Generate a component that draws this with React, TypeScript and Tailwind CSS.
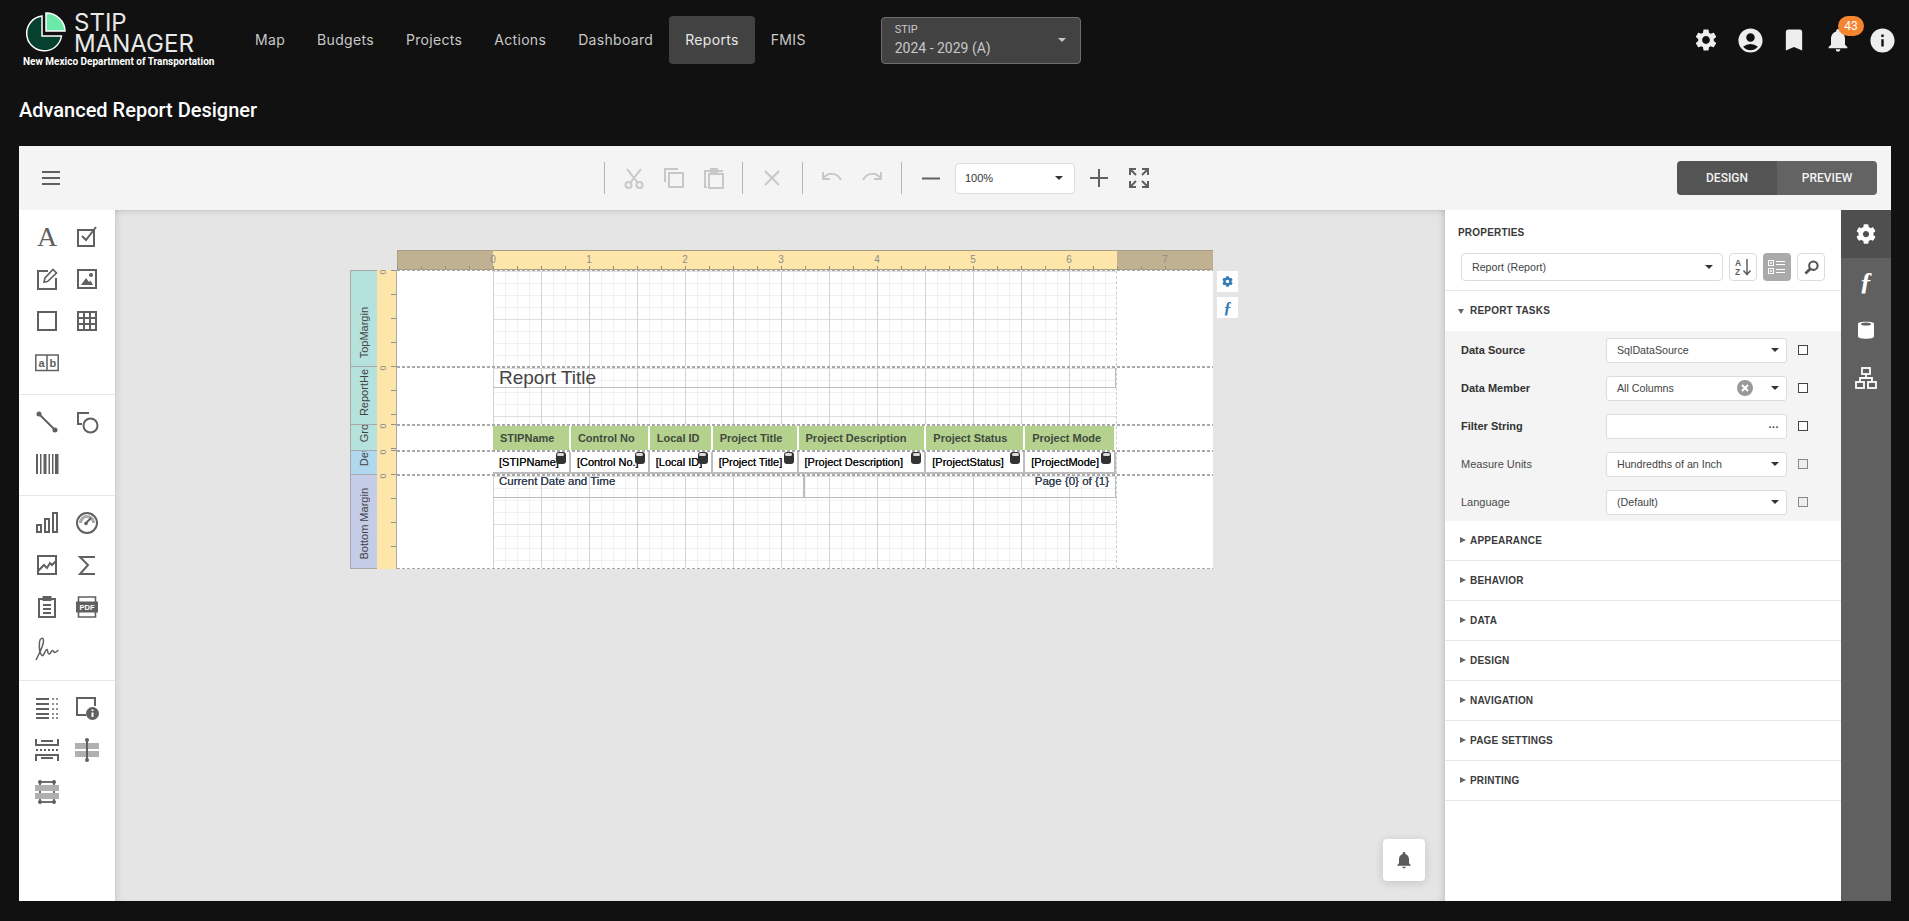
import type { ReactNode } from "react";
import { FaCog } from "react-icons/fa";
import {
  MdSettings,
  MdAccountCircle,
  MdBookmark,
  MdNotifications,
  MdInfo,
} from "react-icons/md";

const navItems = ["Map", "Budgets", "Projects", "Actions", "Dashboard", "Reports", "FMIS"];

const G = "#606060";

// Left toolbox icons
const Ic = ({ children }: { children: ReactNode }) => (
  <svg viewBox="0 0 24 24" className="w-6 h-6" fill="none" stroke={G} strokeWidth="2">
    {children}
  </svg>
);

const toolGroups: (ReactNode | null)[][] = [
  [
    <span key="a" className="font-['Liberation_Serif',serif] text-[28px] leading-6 text-[#606060]">A</span>,
    <Ic key="check"><rect x="3" y="5" width="16" height="16" /><path d="M7 11l4 4L21 2" /></Ic>,
    <Ic key="edit">
      <path d="M13 4H3v18h18V11" />
      <path d="M9 15l1-4L18 2.5l3.5 3.5L12.5 14.500z" strokeWidth="1.6" />
    </Ic>,
    <Ic key="img">
      <rect x="3" y="3" width="18" height="18" />
      <circle cx="16" cy="8" r="2" fill={G} stroke="none" />
      <path d="M6 18l5-7 3 4 1.5-1.5L18 18z" fill={G} stroke="none" />
    </Ic>,
    <Ic key="square"><rect x="3" y="3" width="18" height="18" /></Ic>,
    <Ic key="table"><rect x="3" y="3" width="18" height="18" /><path d="M9 3v18M15 3v18M3 9h18M3 15h18" /></Ic>,
    <svg key="ab" viewBox="0 0 24 18" className="w-6 h-[18px]" fill="none" stroke={G} strokeWidth="1.5">
      <rect x=".8" y="1" width="22.4" height="15.5" />
      <path d="M12 1v15.500" />
      <text x="3.5" y="13" fontSize="11" fontWeight="700" fill={G} stroke="none" fontFamily="Liberation Sans">a</text>
      <text x="14.5" y="13" fontSize="11" fontWeight="700" fill={G} stroke="none" fontFamily="Liberation Sans">b</text>
    </svg>,
    null,
  ],
  [
    <Ic key="line"><path d="M4 4l16 16" /><circle cx="4" cy="4" r="1.5" fill={G} /><circle cx="20" cy="20" r="1.5" fill={G} /></Ic>,
    <Ic key="shape"><path d="M14 3H3v11h4" /><circle cx="15.5" cy="15.5" r="7" /></Ic>,
    <svg key="bar" viewBox="0 0 24 22" className="w-6 h-[22px]" fill={G}>
      <path d="M1 1h2v20H1zM5 1h1.5v20H5zM8.5 1h3v20h-3zM13.5 1H15v20h-1.5zM17 1h1.5v20H17zM20 1h3.5v20H20z" />
    </svg>,
    null,
  ],
  [
    <Ic key="bars"><rect x="2" y="14" width="4" height="7" /><rect x="10" y="8" width="4" height="13" /><rect x="18" y="2" width="4" height="19" /></Ic>,
    <Ic key="gauge">
      <circle cx="12" cy="12" r="10" />
      <path d="M5.5 12a6.5 6.5 0 0 1 13 0" stroke="#aaaaaa" strokeWidth="3" />
      <path d="M11 12l5-5" />
      <circle cx="11" cy="12.5" r="1.8" fill={G} stroke="none" />
    </Ic>,
    <Ic key="area"><rect x="3" y="3" width="18" height="18" /><path d="M3 18l6-6 3 3 3-5 2 2 4-4" /></Ic>,
    <Ic key="sigma"><path d="M20 4H5l8 8-8 9h15" /></Ic>,
    <Ic key="clip">
      <path d="M8 4H4v18h16V4h-4" />
      <rect x="8.5" y="2" width="7" height="3" fill={G} />
      <path d="M8 10h8M8 14h8M8 18h8" />
    </Ic>,
    <svg key="pdf" viewBox="0 0 24 24" className="w-6 h-6" fill="none" stroke={G} strokeWidth="1.6">
      <path d="M3.5 7V2h17v5M3.5 17v5h17v-5" />
      <rect x="1" y="6.5" width="22" height="11" fill={G} stroke="none" />
      <text x="12" y="15" textAnchor="middle" fontSize="7.5" fontWeight="700" fill="#ffffff" stroke="none" fontFamily="Liberation Sans">PDF</text>
    </svg>,
    <svg key="sign" viewBox="0 0 24 24" className="w-6 h-6" fill="none" stroke={G} strokeWidth="1.5">
      <path d="M1 23C5 15 9 8 8.5 3 8 0 5 1 4.500 5 4 11 5 17 7 18.500 9 20 10 12 12 12.500 13 13 12.500 17 14 17 16 17 16 13.500 17.500 13.500 18.500 13.500 18.500 15.500 20 15.500 21 15.500 22 14 23.500 13" />
    </svg>,
    null,
  ],
  [
    <svg key="list" viewBox="0 0 24 22" className="w-6 h-[22px]" fill={G}>
      <path d="M1 1h13v2H1zM1 6h13v2H1zM1 11h13v2H1zM1 16h13v2H1zM1 20h13v2H1z" />
      <path d="M17 1h2v2h-2zM21 1h2v2h-2zM17 6h2v2h-2zM21 6h2v2h-2zM17 11h2v2h-2zM21 11h2v2h-2zM17 16h2v2h-2zM21 16h2v2h-2zM17 20h2v2h-2zM21 20h2v2h-2z" fillOpacity=".7" />
    </svg>,
    <svg key="inf" viewBox="0 0 24 24" className="w-6 h-6" fill="none" stroke={G} strokeWidth="2">
      <path d="M11 19H2V2h18v8" />
      <circle cx="17.5" cy="17.5" r="6.5" fill={G} stroke="none" />
      <path d="M17.5 16.5v4.500M17.5 13.500v1.500" stroke="#ffffff" />
    </svg>,
    <svg key="hdr" viewBox="0 0 24 24" className="w-6 h-6" fill="none" stroke={G} strokeWidth="2">
      <path d="M1 1v6h22V1M6 3h12M1 23v-6h22v6M6 20h12" />
      <path d="M1 12h22" strokeDasharray="2 2" />
    </svg>,
    <svg key="c1" viewBox="0 0 24 24" className="w-6 h-6" fill={G}>
      <rect y="5" width="24" height="6" fill="#b0b0b0" />
      <rect y="13" width="24" height="6" fill="#b0b0b0" />
      <path d="M11 2h2v20h-2z" />
      <circle cx="12" cy="2" r="2" />
      <circle cx="12" cy="22" r="2" />
    </svg>,
    <svg key="c2" viewBox="0 0 24 24" className="w-6 h-6" fill={G}>
      <path d="M5 1h14v2H5zM5 21h14v2H5zM4 3h2v18H4zM18 3h2v18h-2z" fillOpacity=".9" />
      <circle cx="5" cy="2" r="2" />
      <circle cx="19" cy="2" r="2" />
      <circle cx="5" cy="22" r="2" />
      <circle cx="19" cy="22" r="2" />
      <rect y="5" width="24" height="6" fill="#b0b0b0" />
      <rect y="13" width="24" height="6" fill="#b0b0b0" />
    </svg>,
    null,
  ],
];

// Top toolbar icons
const Tb = ({ children, color = "#c8c8c8" }: { children: ReactNode; color?: string }) => (
  <button className="w-10 h-8 flex items-center justify-center">
    <svg viewBox="0 0 24 24" className="w-6 h-6" fill="none" stroke={color} strokeWidth="2">
      {children}
    </svg>
  </button>
);

const Sep = ({ className }: { className: string }) => (
  <div className={`w-px h-8 bg-[#b5b5b5] ${className}`} />
);

const Caret = () => (
  <svg viewBox="0 0 8 4" className="w-2 h-1 shrink-0" fill="#333333">
    <path d="M0 0h8L4 4z" />
  </svg>
);

const Arrow = ({ open }: { open?: boolean }) => (
  <svg viewBox="0 0 6 6" className="w-[6px] h-[6px] shrink-0" fill="#666666">
    <path d={open ? "M0 1h6L3 6z" : "M0 0l6 3-6 3z"} />
  </svg>
);

// Report surface
const TopRuler = () => (
  <svg viewBox="0 0 816 20" className="block w-[816px] h-5 ml-[47px]">
    <rect width="816" height="20" fill="#fee5a9" />
    <rect width="96" height="20" fill="#bfb192" />
    <rect x="720" width="96" height="20" fill="#bfb192" />
    <path d="M0 .5h816M.5 0v20M0 19.5h816" stroke="#a89e80" />
    {Array.from({ length: 33 }).map((_, i) => (
      <path key={i} d={`M${i * 24 + 0.5} 16v3`} stroke="#8f8f8f" />
    ))}
    {[0, 1, 2, 3, 4, 5, 6, 7].map((n) => (
      <text key={n} x={96 + n * 96} y="13" textAnchor="middle" fontSize="10" fill="#8c8c8c" fontFamily="Liberation Sans">
        {n}
      </text>
    ))}
  </svg>
);

const SideRuler = ({ height, label }: { height: number; label: string }) => (
  <svg viewBox={`0 0 19 ${height}`} className="block w-5 h-full bg-[#fee5a9] border-r border-[#a8a8a8]">
    {Array.from({ length: Math.ceil(height / 24) }).map((_, i) => (
      <path key={i} d={`M14 ${i * 24 + 0.5}h5`} stroke="#8f8f8f" />
    ))}
    <text transform="translate(9 2) rotate(-90)" textAnchor="middle" fontSize="9" fill="#8c8c8c" fontFamily="Liberation Sans">
      {label}
    </text>
  </svg>
);

const gridBg =
  "bg-[linear-gradient(to_right,#d2d2d2_1px,transparent_1px),linear-gradient(to_bottom,#dedede_1px,transparent_1px),linear-gradient(to_right,#f1f1f1_1px,transparent_1px),linear-gradient(to_bottom,#f1f1f1_1px,transparent_1px)] bg-[length:48px_48px,48px_48px,12px_12px,12px_12px]";

const dash =
  "bg-[repeating-linear-gradient(to_right,#a8a8a8_0,#a8a8a8_3px,transparent_3px,transparent_5px)]";

const Section = ({
  label,
  height,
  heightClass,
  bandClass,
  thin,
  bottom,
  children,
}: {
  label: string;
  height: number;
  heightClass: string;
  bandClass: string;
  thin?: boolean;
  bottom?: boolean;
  children?: ReactNode;
}) => (
  <div className={`flex ${heightClass}`}>
    <div className={`w-[27px] flex flex-col items-center justify-end overflow-hidden pb-2 border-l border-t border-[#a8a8a8] ${bandClass}`}>
      <span className="[writing-mode:vertical-rl] rotate-180 whitespace-nowrap text-[11px] leading-[13px] text-[#444444]">
        {label}
      </span>
    </div>
    <SideRuler height={height} label="0" />
    <div className="w-[816px] flex flex-col bg-white">
      <div className={`${thin ? "h-px" : "h-[2px]"} shrink-0 ${dash}`} />
      <div className="flex flex-1 min-h-0">
        <div className="w-[96px]" />
        <div className={`w-[624px] border-r border-dashed border-[#cccccc] ${gridBg}`}>{children}</div>
      </div>
      {bottom && <div className={`h-px shrink-0 ${dash}`} />}
    </div>
  </div>
);

const headCells = [
  { text: "STIPName", w: "w-[78px]" },
  { text: "Control No", w: "w-[79px]" },
  { text: "Local ID", w: "w-[63px]" },
  { text: "Project Title", w: "w-[86px]" },
  { text: "Project Description", w: "w-[128px]" },
  { text: "Project Status", w: "w-[99px]" },
  { text: "Project Mode", w: "w-[91px]" },
];

const detailCells = [
  { text: "[STIPName]", w: "w-[78px]" },
  { text: "[Control No.]", w: "w-[79px]" },
  { text: "[Local ID]", w: "w-[63px]" },
  { text: "[Project Title]", w: "w-[86px]" },
  { text: "[Project Description]", w: "w-[128px]" },
  { text: "[ProjectStatus]", w: "w-[99px]" },
  { text: "[ProjectMode]", w: "w-[91px]" },
];

const taskRows = [
  { label: "Data Source", bold: true, value: "SqlDataSource" },
  { label: "Data Member", bold: true, value: "All Columns", clear: true },
  { label: "Filter String", bold: true, value: "", dots: true },
  { label: "Measure Units", value: "Hundredths of an Inch", muted: true },
  { label: "Language", value: "(Default)", muted: true },
];

const categories = ["APPEARANCE", "BEHAVIOR", "DATA", "DESIGN", "NAVIGATION", "PAGE SETTINGS", "PRINTING"];

export default function App() {
  return (
    <div className="h-[921px] bg-[#111111] overflow-hidden flex flex-col font-['Liberation_Sans',sans-serif]">
      {/* Header */}
      <header className="h-20 flex items-center shrink-0">
        <div className="w-[239px] pl-[23px]">
          <div className="flex pl-px">
            <svg viewBox="0 0 42 42" className="w-[42px] h-[42px]">
              <path d="M18 4A17.5 17.5 0 1 0 37.5 24H18z" fill="#06402f" stroke="#ffffff" strokeWidth="1.5" />
              <path d="M22 1c10 0 19 8 19 18H22z" fill="#6ce9a8" stroke="#ffffff" strokeWidth="1.5" />
            </svg>
            <div className="ml-2 font-[Inter,sans-serif] text-[24px] leading-[21px] text-[#e8e8e8]">
              <div>STIP</div>
              <div>MANAGER</div>
            </div>
          </div>
          <div className="font-[Roboto,sans-serif] font-bold text-[11.5px] leading-[14px] text-white whitespace-nowrap origin-left scale-x-[.87]">
            New Mexico Department of Transportation
          </div>
        </div>
        <nav className="flex font-[Inter,sans-serif] text-sm tracking-[.32px]">
          {navItems.map((item) =>
            item === "Reports" ? (
              <a key={item} className="h-12 px-4 flex items-center rounded bg-[#424242] text-[#e8e8e8]">
                {item}
              </a>
            ) : (
              <a key={item} className="h-12 px-4 flex items-center text-[#c8c8c8]">
                {item}
              </a>
            ),
          )}
        </nav>
        <div className="ml-[59px] w-[200px] h-[47px] pl-[13px] pr-[14px] rounded border border-[#6e6e6e] bg-[#424242] flex items-center justify-between font-[Roboto,sans-serif] text-[#c8c8c8]">
          <div>
            <div className="text-[11px] leading-4">STIP</div>
            <div className="text-sm leading-5">2024 - 2029 (A)</div>
          </div>
          <svg viewBox="0 0 8 4" className="w-2 h-1" fill="#c8c8c8">
            <path d="M0 0h8L4 4z" />
          </svg>
        </div>
        <div className="ml-auto mr-[5px] flex text-[#eeeeee]">
          <div className="w-11 h-11 flex items-center justify-center"><MdSettings size={26} /></div>
          <div className="w-11 h-11 flex items-center justify-center"><MdAccountCircle size={29} /></div>
          <div className="w-11 h-11 flex items-center justify-center"><MdBookmark size={28} /></div>
          <div className="w-11 h-11 flex items-center justify-center relative">
            <MdNotifications size={28} />
            <span className="absolute left-[22px] -top-[2px] w-[26px] h-5 rounded-full bg-[#f5862f] text-white text-xs font-[Roboto,sans-serif] flex items-center justify-center">
              43
            </span>
          </div>
          <div className="w-11 h-11 flex items-center justify-center"><MdInfo size={29} /></div>
        </div>
      </header>

      <div className="h-[66px] pl-[19px] pt-[16px] shrink-0 font-[Roboto,sans-serif] font-medium text-[20px] leading-7 text-white">
        Advanced Report Designer
      </div>

      {/* Designer */}
      <div className="ml-[19px] w-[1872px] h-[755px] flex flex-col">
        {/* Toolbar */}
        <div className="h-16 shrink-0 bg-[#f4f4f4] flex items-center">
          <svg viewBox="0 0 20 14" className="w-5 h-[14px] ml-[22px] mr-[543px]" fill="#606060">
            <path d="M1 0h18v2H1zM1 6h18v2H1zM1 12h18v2H1z" />
          </svg>
          <Sep className="" />
          <div className="w-[9px]" />
          <Tb>
            <circle cx="6.5" cy="19" r="3" />
            <circle cx="17.5" cy="19" r="3" />
            <path d="M8.5 16.5L19 3M15.5 16.5L5 3" />
          </Tb>
          <Tb>
            <path d="M3 16V3h13" />
            <rect x="7" y="7" width="14" height="14" />
          </Tb>
          <Tb>
            <path d="M5 21H3V5h5M16 5h5" />
            <path d="M9 3h6v3H9z" fill="#c8c8c8" />
            <rect x="7" y="8" width="14" height="14" />
          </Tb>
          <Sep className="ml-2" />
          <div className="w-[9px]" />
          <Tb>
            <path d="M5 5l14 14M19 5L5 19" />
          </Tb>
          <Sep className="ml-[10px]" />
          <div className="w-[9px]" />
          <Tb>
            <path d="M3 6v7h7" />
            <path d="M3 13c4-7 14-7 18 1" />
          </Tb>
          <Tb>
            <path d="M21 6v7h-7" />
            <path d="M21 13c-4-7-14-7-18 1" />
          </Tb>
          <Sep className="ml-[9px]" />
          <div className="w-[9px]" />
          <Tb color="#606060">
            <path d="M3 12.5h18" />
          </Tb>
          <div className="ml-1 w-[120px] h-[31px] bg-white border border-[#dcdcdc] rounded pl-[9px] pr-[11px] flex items-center justify-between text-[11px] text-[#333333]">
            100%
            <Caret />
          </div>
          <div className="w-1" />
          <Tb color="#606060">
            <path d="M12 3v18M3 12h18" />
          </Tb>
          <button className="w-10 h-8 flex items-center justify-center">
            <svg viewBox="0 0 24 24" className="w-6 h-6" fill="none" stroke="#606060" strokeWidth="2">
              <path d="M3 9V3h6M3 3l6 6M21 9V3h-6M21 3l-6 6M3 15v6h6M3 21l6-6M21 15v6h-6M21 21l-6-6" />
            </svg>
          </button>
          <div className="ml-auto mr-[14px] w-[200px] h-[34px] rounded flex overflow-hidden font-[Roboto,sans-serif] font-medium text-xs text-[#f2f2f2]">
            <div className="w-[100px] bg-[#545454] flex items-center justify-center">DESIGN</div>
            <div className="w-[100px] bg-[#636363] flex items-center justify-center">PREVIEW</div>
          </div>
        </div>

        <div className="flex-1 flex min-h-0">
          {/* Toolbox */}
          <div className="w-24 bg-white shrink-0">
            {toolGroups.map((group, i) => (
              <div key={i} className="pt-[6px] pb-[10px] pl-2 border-b border-[#e6e6e6] last:border-b-0 grid grid-cols-[40px_40px] auto-rows-[42px]">
                {group.map((icon, j) => (
                  <div key={j} className="flex items-center justify-center">
                    {icon}
                  </div>
                ))}
              </div>
            ))}
          </div>

          {/* Surface */}
          <div className="flex-1 relative bg-[#e5e5e5] pl-[235px] pt-10 shadow-[inset_6px_0_8px_-6px_rgba(0,0,0,0.15),inset_-6px_0_8px_-6px_rgba(0,0,0,0.2),inset_0_6px_8px_-6px_rgba(0,0,0,0.15)]">
            <TopRuler />
            <Section label="TopMargin" height={96} heightClass="h-[96px]" bandClass="bg-[#b5e2dc]" thin />
            <Section label="ReportHe" height={58} heightClass="h-[58px]" bandClass="bg-[#b5e2dc]">
              <div className="h-[20px] pl-[6px] border-b border-r border-[#bdbdbd] text-[19px] leading-[19px] text-[#444444]">
                Report Title
              </div>
            </Section>
            <Section label="Gro" height={26} heightClass="h-[26px]" bandClass="bg-[#b5e2dc]">
              <div className="flex h-full">
                {headCells.map((c) => (
                  <div key={c.text} className={`${c.w} pl-[7px] border-r-2 border-white bg-[#b5d18e] bg-clip-padding flex items-center text-[11px] font-bold text-[#404a40] whitespace-nowrap`}>
                    {c.text}
                  </div>
                ))}
              </div>
            </Section>
            <Section label="Det" height={24} heightClass="h-[24px]" bandClass="bg-[#b0d9ef]">
              <div className="flex h-full">
                {detailCells.map((c) => (
                  <div key={c.text} className={`${c.w} relative pl-[6px] border-r-2 border-b-2 border-[#bdbdbd] bg-white flex items-center text-[11px] text-[#111111] [text-shadow:0_0_0.5px_currentColor] whitespace-nowrap`}>
                    {c.text}
                    <span className="absolute right-[3px] top-0 w-[10px] h-3 rounded-[3px] bg-[#333333] flex justify-center pt-px">
                      <span className="w-[7px] h-[3px] rounded-full bg-[#dddddd]" />
                    </span>
                  </div>
                ))}
              </div>
            </Section>
            <Section label="Bottom Margin" height={95} heightClass="h-[95px]" bandClass="bg-[#c4cce8] border-b" bottom>
              <div className="flex h-[22px] text-[11.5px] leading-[11px] text-[#333f4f] [text-shadow:0_0_0.5px_currentColor]">
                <div className="w-[312px] pl-[6px] border-b border-r-2 border-[#bdbdbd]">Current Date and Time</div>
                <div className="flex-1 pr-[6px] text-right border-b border-r border-[#bdbdbd]">
                  Page {"{0}"} of {"{1}"}
                </div>
              </div>
            </Section>

            {/* Surface quick buttons */}
            <div className="absolute left-[1102px] top-[61px] flex flex-col gap-[5px]">
              <div className="w-[21px] h-[21px] bg-white flex items-center justify-center text-[#337ab7]">
                <FaCog size={11} />
              </div>
              <div className="w-[21px] h-[21px] bg-white flex items-center justify-center font-['Liberation_Serif',serif] italic font-bold text-[16px] text-[#337ab7]">
                ƒ
              </div>
            </div>

            {/* Notifications button */}
            <div className="absolute right-5 bottom-5 w-[42px] h-[42px] rounded bg-white flex items-center justify-center text-[#5a5a5a] shadow-[0_2px_10px_rgba(0,0,0,0.15)]">
              <MdNotifications size={20} />
            </div>
          </div>

          {/* Properties */}
          <div className="w-[396px] shrink-0 bg-white text-[10.67px]">
            <div className="h-[81px] border-b border-[#e6e6e6] pt-[18px] px-[13px]">
              <div className="text-[10px] leading-[10px] font-bold text-[#3a3a3a] tracking-[.2px]">PROPERTIES</div>
              <div className="mt-[15px] ml-[3px] flex items-center">
                <div className="w-[262px] h-[28px] pl-[10px] pr-[9px] border border-[#dcdcdc] rounded flex items-center justify-between text-[#444444]">
                  Report (Report)
                  <Caret />
                </div>
                <button className="ml-[6px] w-7 h-7 border border-[#dcdcdc] rounded flex items-center justify-center">
                  <svg viewBox="0 0 18 18" className="w-[18px] h-[18px]">
                    <text x="1" y="8" fontSize="8.5" fontWeight="700" fill="#606060" fontFamily="Liberation Sans">A</text>
                    <text x="1" y="17" fontSize="8.5" fontWeight="700" fill="#606060" fontFamily="Liberation Sans">Z</text>
                    <path d="M13 1v15M9.5 12.5L13 16.5l3.5-4" stroke="#606060" strokeWidth="1.5" fill="none" />
                  </svg>
                </button>
                <button className="ml-[6px] w-7 h-7 rounded bg-[#aaaaaa] flex items-center justify-center">
                  <svg viewBox="0 0 18 16" className="w-[18px] h-4" fill="none" stroke="#ffffff">
                    <rect x=".5" y="1.5" width="5" height="5" />
                    <rect x=".5" y="9.5" width="5" height="5" />
                    <path d="M8 2.5h9M8 5.5h9M8 10.5h9M8 13.5h9M3 3v2M2 4h2M3 11v2M2 12h2" />
                  </svg>
                </button>
                <button className="ml-[6px] w-7 h-7 border border-[#dcdcdc] rounded flex items-center justify-center">
                  <svg viewBox="0 0 16 16" className="w-[15px] h-[15px]" fill="none" stroke="#555555" strokeWidth="2.2">
                    <circle cx="10" cy="6" r="4.5" />
                    <path d="M6.5 9.5L1.5 14.5" strokeWidth="3" />
                  </svg>
                </button>
              </div>
            </div>

            <div className="h-10 pl-[13px] pb-px flex items-center gap-[6px]">
              <Arrow open />
              <span className="text-[10px] font-bold tracking-[.2px] text-[#3a3a3a]">REPORT TASKS</span>
            </div>

            <div className="bg-[#f4f4f4]">
              {taskRows.map((row) => (
                <div key={row.label} className="h-[38px] pl-4 flex items-center">
                  <div className={row.bold ? "w-[145px] text-[11px] font-bold text-[#333333]" : "w-[145px] text-[11px] text-[#4a4a4a]"}>
                    {row.label}
                  </div>
                  <div className="w-[181px] h-[25px] pl-[10px] pr-[7px] bg-white border border-[#dcdcdc] rounded-[3px] flex items-center justify-between text-[#444444]">
                    <span>{row.value}</span>
                    <div className="flex items-center gap-[18px]">
                      {row.clear && (
                        <svg viewBox="0 0 16 16" className="w-4 h-4">
                          <circle cx="8" cy="8" r="8" fill="#999999" />
                          <path d="M5 5l6 6M11 5l-6 6" stroke="#ffffff" strokeWidth="2" />
                        </svg>
                      )}
                      {row.dots ? <span className="font-bold tracking-[.5px] leading-none -mt-1">...</span> : <Caret />}
                    </div>
                  </div>
                  <div className={row.muted ? "ml-[11px] w-[10px] h-[10px] border border-[#888888] bg-[#eeeeee]" : "ml-[11px] w-[10px] h-[10px] border border-[#444444] bg-white"} />
                </div>
              ))}
            </div>

            {categories.map((c) => (
              <div key={c} className="h-10 pl-[15px] pb-px border-b border-[#e6e6e6] flex items-center gap-1">
                <Arrow />
                <span className="text-[10px] font-bold tracking-[.2px] text-[#3a3a3a]">{c}</span>
              </div>
            ))}
          </div>

          {/* Side tabs */}
          <div className="w-[50px] shrink-0 bg-[#606060] text-white">
            <div className="h-12 bg-[#4f4f4f] flex items-center justify-center">
              <FaCog size={20} />
            </div>
            <div className="h-12 flex items-center justify-center font-['Liberation_Serif',serif] italic font-bold text-[26px] leading-none">
              ƒ
            </div>
            <div className="h-12 flex items-center justify-center">
              <svg viewBox="0 0 16 20" className="w-4 h-5" fill="#ffffff">
                <path d="M0 3.5C0 1 16 1 16 3.5v13c0 3-16 3-16 0z" />
                <ellipse cx="8" cy="4" rx="5" ry="1.6" fill="#606060" />
              </svg>
            </div>
            <div className="h-12 flex items-center justify-center">
              <svg viewBox="0 0 22 22" className="w-[22px] h-[22px]" fill="none" stroke="#ffffff" strokeWidth="1.8">
                <rect x="7" y="1" width="8" height="6" />
                <rect x="1" y="15" width="8" height="6" />
                <rect x="13" y="15" width="8" height="6" />
                <path d="M11 7v4M5 15v-4h12v4" />
              </svg>
            </div>
          </div>
        </div>
      </div>
    </div>
  );
}
